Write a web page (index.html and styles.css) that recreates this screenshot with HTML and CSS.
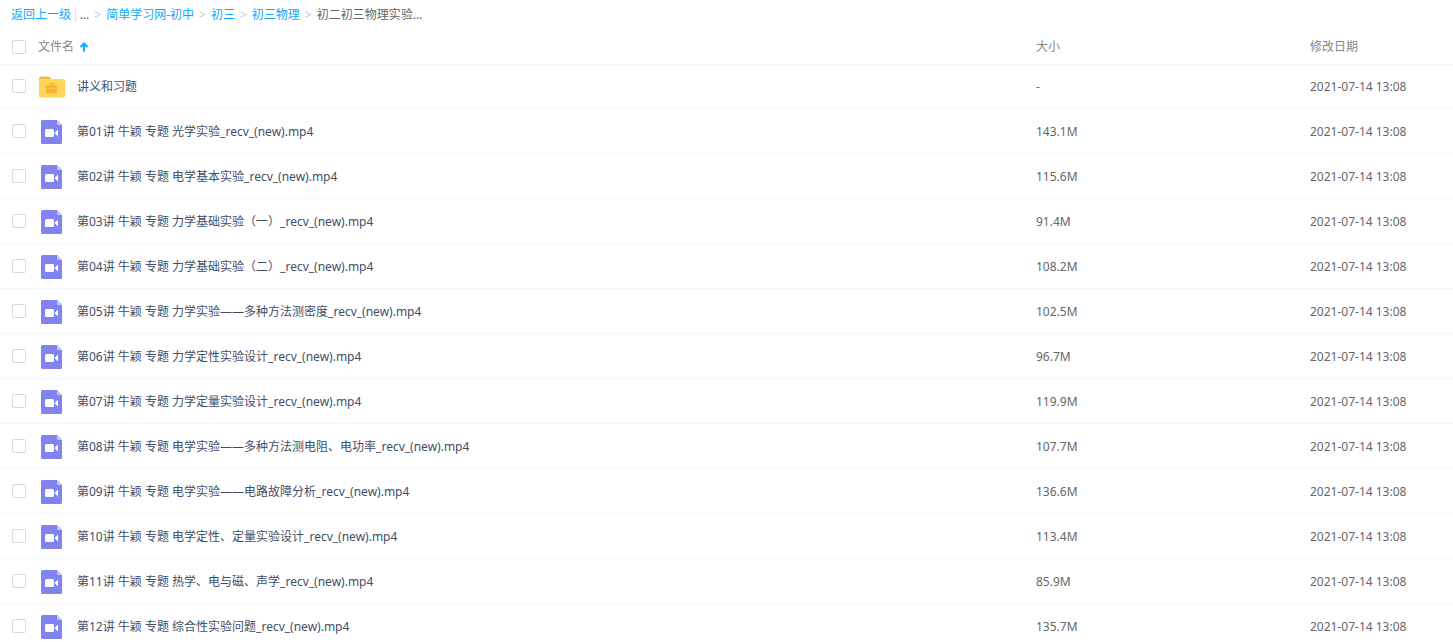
FILE: index.html
```html
<!DOCTYPE html>
<html lang="zh-CN">
<head>
    <meta charset="UTF-8">
    <meta name="viewport" content="width=device-width, initial-scale=1.0">
    <title>初二初三物理实验</title>
    <link rel="stylesheet" href="styles.css">
</head>
<body>
    <svg class="sprite" aria-hidden="true">
        <symbol id="icon-folder" viewBox="0 0 26 22">
            <path fill="#edbf47" d="M0 8V2a1.500 1.500 0 0 1 1.500-1.500h8a2 2 0 0 1 1.700 1L12.500 4v4z"/>
            <rect y="3" width="26" height="18.500" rx="1.500" fill="#ffd659"/>
            <path fill="none" stroke="#f7b52f" d="M10 9.500V8.500a1 1 0 0 1 1-1h3a1 1 0 0 1 1 1v1"/>
            <rect x="7" y="9" width="11" height="8.500" rx="1" fill="#f7b52f"/>
            <path stroke="#ffd659" stroke-width=".6" d="M7 12.500h11"/>
            <path stroke="#f7b52f" stroke-width=".6" d="M6 11.800h13.500"/>
        </symbol>
        <symbol id="icon-video" viewBox="0 0 21 24">
            <path fill="#8183f1" d="M1.500 0H16l5 5v17.500a1.500 1.500 0 0 1-1.500 1.500h-18A1.500 1.500 0 0 1 0 22.500v-21A1.500 1.500 0 0 1 1.500 0z"/>
            <path fill="#c6c6fa" d="M16 0l5 5h-4a1 1 0 0 1-1-1z"/>
            <rect x="4" y="9" width="9" height="8" rx="1.500" fill="#fff"/>
            <path fill="#fff" d="M13.500 13L17 9.500v7z"/>
        </symbol>
    </svg>

    <nav class="crumbs">
        <a href="#">返回上一级</a><span class="bar">|</span><span>...</span>
        <span class="sep">&gt;</span>
        <a href="#">简单学习网-初中</a>
        <span class="sep">&gt;</span>
        <a href="#">初三</a>
        <span class="sep">&gt;</span>
        <a href="#">初三物理</a>
        <span class="sep">&gt;</span>
        <span>初二初三物理实验...</span>
    </nav>

    <table class="files">
        <thead>
            <tr>
                <th class="name">
                    <div class="cell">
                        <input type="checkbox" class="check" aria-label="全选">
                        <span class="title">文件名</span>
                        <svg class="sort" viewBox="0 0 10 10"><path fill="none" stroke="#09aaff" stroke-width="2" d="M5 9.500V2M1.500 5L5 1.500 8.500 5"/></svg>
                    </div>
                </th>
                <th class="size">大小</th>
                <th class="date">修改日期</th>
            </tr>
        </thead>
        <tbody id="list"></tbody>
    </table>

<script>
const files = [
    ['讲义和习题', '-'],
    ['第01讲 牛颖 专题 光学实验_recv_(new).mp4', '143.1M'],
    ['第02讲 牛颖 专题 电学基本实验_recv_(new).mp4', '115.6M'],
    ['第03讲 牛颖 专题 力学基础实验（一）_recv_(new).mp4', '91.4M'],
    ['第04讲 牛颖 专题 力学基础实验（二）_recv_(new).mp4', '108.2M'],
    ['第05讲 牛颖 专题 力学实验——多种方法测密度_recv_(new).mp4', '102.5M'],
    ['第06讲 牛颖 专题 力学定性实验设计_recv_(new).mp4', '96.7M'],
    ['第07讲 牛颖 专题 力学定量实验设计_recv_(new).mp4', '119.9M'],
    ['第08讲 牛颖 专题 电学实验——多种方法测电阻、电功率_recv_(new).mp4', '107.7M'],
    ['第09讲 牛颖 专题 电学实验——电路故障分析_recv_(new).mp4', '136.6M'],
    ['第10讲 牛颖 专题 电学定性、定量实验设计_recv_(new).mp4', '113.4M'],
    ['第11讲 牛颖 专题 热学、电与磁、声学_recv_(new).mp4', '85.9M'],
    ['第12讲 牛颖 专题 综合性实验问题_recv_(new).mp4', '135.7M']
];

const list = document.querySelector('#list');

files.forEach(function(file, i){
    const icon = file[1] === '-' ? 'folder' : 'video';
    list.innerHTML += `<tr>
        <td class="name">
            <div class="cell">
                <input type="checkbox" class="check" id="file${i}">
                <span class="icon"><svg class="${icon}"><use href="#icon-${icon}"/></svg></span>
                <label for="file${i}">${file[0]}</label>
            </div>
        </td>
        <td class="size">${file[1]}</td>
        <td class="date">2021-07-14 13:08</td>
    </tr>`;
});
</script>
</body>
</html>
```
FILE: styles.css
```css
body{
    margin:0;
    background-color: white;
    color:#424e67;
    font-family: "Noto Sans", "Noto Sans CJK SC", sans-serif;
    font-size: 12px;
    line-height: 18px;
}
.sprite{
    display: none;
}
a{
    color:#09aaff;
    text-decoration: none;
}
.crumbs{
    display: flex;
    padding:6px 11px;
    color:#666;
    white-space: nowrap;
}
.bar{
    margin:0 1px;
    color:#b9e4fb;
}
.sep{
    margin:0 5px;
    color:#b4cbea;
}
.files{
    width:100%;
    table-layout: fixed;
    border-collapse: separate;
    border-spacing: 0;
}
.files th, .files td{
    box-sizing: border-box;
    height:45px;
    padding:0;
    border-bottom: 1px solid #f2f6fd;
    text-align: left;
    white-space: nowrap;
}
.files td{
    padding-top: 2px;
}
.files th{
    height:35px;
    color:#888;
    font-weight: normal;
}
.files .size{
    width:274px;
}
.files .date{
    width:143px;
}
.files td.size, .files td.date{
    color:#666;
}
.files tbody tr:first-child td{
    height:44px;
    padding-top: 0;
}
.cell{
    display: flex;
    align-items: center;
    padding-left: 12px;
}
.check{
    appearance: none;
    box-sizing: border-box;
    flex:none;
    width:14px;
    height:14px;
    margin:0 12px 0 0;
    border:1px solid #d4dbe5;
    border-radius: 2px;
    background-color: white;
}
td .check{
    margin-bottom: 2px;
}
.check:checked{
    background-color: #09aaff;
}
.icon{
    display: flex;
    justify-content: center;
    width:27px;
    margin-right: 12px;
}
.folder{
    width:26px;
    height:22px;
}
.video{
    width:21px;
    height:24px;
}
.sort{
    width:10px;
    height:10px;
    margin-left: 5px;
}
tbody tr:hover{
    background-color: #f4fbff;
}
```
